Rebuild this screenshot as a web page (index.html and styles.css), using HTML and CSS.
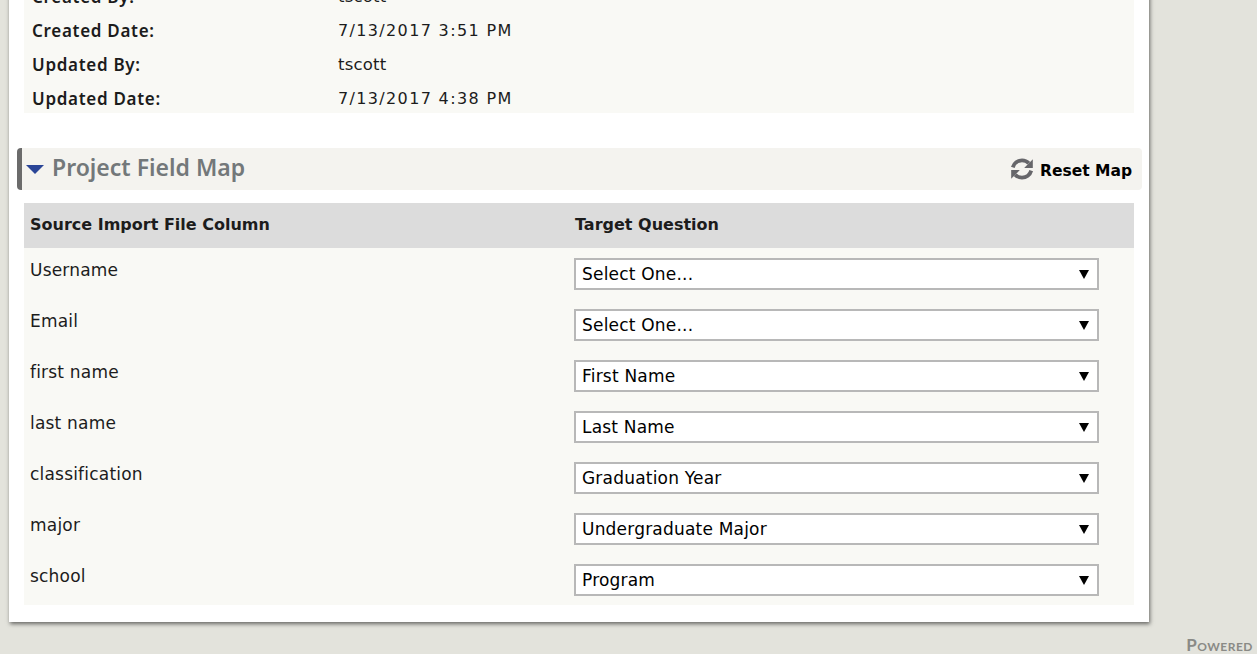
FILE: index.html

```html
<!DOCTYPE html>
<html lang="en">

<head>
    <meta charset="UTF-8">
    <meta name="viewport" content="width=device-width, initial-scale=1.0">
    <title>Project Field Map</title>
    <link rel="stylesheet" href="styles.css">
</head>

<body>
    <div class="container">
        <div class="panel">
            <div class="details">
                <div class="detail-row"><span class="detail-label">Created By:</span><span class="value">tscott</span></div>
                <div class="detail-row"><span class="detail-label">Created Date:</span><span class="date">7/13/2017 3:51 PM</span></div>
                <div class="detail-row"><span class="detail-label">Updated By:</span><span class="value">tscott</span></div>
                <div class="detail-row"><span class="detail-label">Updated Date:</span><span class="date">7/13/2017 4:38 PM</span></div>
            </div>

            <div class="section-head">
                <h2><span class="caret"></span>Project Field Map</h2>
                <a class="reset-link" href="#">
                    <svg width="26" height="26" viewBox="0 0 24 24" class="reset-icon">
                        <path d="M3.5 10.5C4.6 6.6 8 4 12 4c2.600 0 4.800 1.100 6.300 2.800" />
                        <path d="M20.500 13.500C19.400 17.400 16 20 12 20c-2.600 0-4.800-1.100-6.300-2.800" />
                        <polygon points="22,3 22,11 14,11" />
                        <polygon points="2,21 2,13 10,13" />
                    </svg>
                    Reset Map
                </a>
            </div>

            <div class="map-table">
                <div class="map-head">
                    <div>Source Import File Column</div>
                    <div>Target Question</div>
                </div>
                <div class="map-row">
                    <div class="source">Username</div>
                    <div class="select-wrap"><select><option>Select One...</option></select></div>
                </div>
                <div class="map-row">
                    <div class="source">Email</div>
                    <div class="select-wrap"><select><option>Select One...</option></select></div>
                </div>
                <div class="map-row">
                    <div class="source">first name</div>
                    <div class="select-wrap"><select><option>First Name</option></select></div>
                </div>
                <div class="map-row">
                    <div class="source">last name</div>
                    <div class="select-wrap"><select><option>Last Name</option></select></div>
                </div>
                <div class="map-row">
                    <div class="source">classification</div>
                    <div class="select-wrap"><select><option>Graduation Year</option></select></div>
                </div>
                <div class="map-row">
                    <div class="source">major</div>
                    <div class="select-wrap"><select><option>Undergraduate Major</option></select></div>
                </div>
                <div class="map-row">
                    <div class="source">school</div>
                    <div class="select-wrap"><select><option>Program</option></select></div>
                </div>
            </div>
        </div>
        <div class="powered">Powered</div>
    </div>
</body>

</html>
```

FILE: styles.css

```css
* {
    margin: 0;
    padding: 0;
    box-sizing: border-box;
    font-family: "DejaVu Sans", sans-serif;
}

html, body {
    height: 100%;
    overflow: hidden;
}

body {
    background: #e3e3dc;
    color: #1c1c1c;
    font-size: 16px;
}

.container {
    margin-top: -21px;
}

.panel {
    width: 1140px;
    margin-left: 9px;
    padding: 0 15px 17px;
    background: #fff;
    box-shadow: 1px 2px 4px rgba(0, 0, 0, 0.55);
}

.details {
    background: #f9f9f5;
    padding: 0 8px;
    height: 134px;
}

.detail-row {
    display: flex;
    height: 34px;
    align-items: center;
}

.detail-label {
    width: 306px;
    font-family: "Noto Sans", sans-serif;
    font-weight: 600;
    font-size: 17px;
    letter-spacing: 0.7px;
}

.value {
    font-size: 16.500px;
    letter-spacing: 0.2px;
}

.date {
    letter-spacing: 1.350px;
}

.section-head {
    display: flex;
    align-items: center;
    justify-content: space-between;
    height: 42px;
    margin: 35px -8px 13px -7px;
    padding: 0 10px 0 4px;
    background: #f4f3ef;
    border-left: 5px solid #6b6b6b;
    border-radius: 4px;
}

.section-head h2 {
    display: flex;
    align-items: center;
    margin-top: -4px;
    font-family: "Noto Sans", sans-serif;
    font-size: 23px;
    font-weight: 600;
    color: #73787a;
}

.caret {
    width: 0;
    height: 0;
    margin-top: 4px;
    margin-right: 8px;
    border-left: 9px solid transparent;
    border-right: 9px solid transparent;
    border-top: 9px solid #2a4597;
}

.reset-link {
    display: flex;
    align-items: center;
    gap: 5px;
    font-size: 15.500px;
    font-weight: bold;
    color: #000;
    text-decoration: none;
    padding-top: 3px;
}

.reset-icon {
    margin-top: -4px;
}

.reset-icon path {
    fill: none;
    stroke: #66666a;
    stroke-width: 3.500;
}

.reset-icon polygon {
    fill: #66666a;
}

.map-table {
    background: #f9f9f5;
}

.map-head {
    display: grid;
    grid-template-columns: 544px 1fr;
    align-items: center;
    height: 45px;
    padding: 0 6px 3px;
    background: #dcdcdc;
    font-weight: bold;
    font-size: 16px;
}

.map-head div:last-child {
    padding-left: 1px;
}

.map-row {
    display: grid;
    grid-template-columns: 544px 525px;
    height: 51px;
    padding: 10px 6px 0;
}

.source {
    padding-top: 1px;
    font-size: 17px;
    letter-spacing: 0.2px;
    line-height: 23px;
}

.select-wrap {
    position: relative;
    height: 32px;
}

.select-wrap select {
    width: 100%;
    height: 32px;
    padding-left: 6px;
    border: 2px solid #b8b8b8;
    border-radius: 0;
    background: #fff;
    color: #000;
    font-size: 17px;
    letter-spacing: 0.2px;
    appearance: none;
}

.select-wrap::after {
    content: "";
    position: absolute;
    right: 10px;
    top: 12px;
    border-left: 5px solid transparent;
    border-right: 5px solid transparent;
    border-top: 9px solid #000;
}

.powered {
    margin-top: 13px;
    padding-right: 4px;
    text-align: right;
    font-family: "Lato", sans-serif;
    font-size: 17px;
    font-weight: 700;
    font-variant: small-caps;
    letter-spacing: 0.5px;
    line-height: 20px;
    color: #8a8a86;
}
```
